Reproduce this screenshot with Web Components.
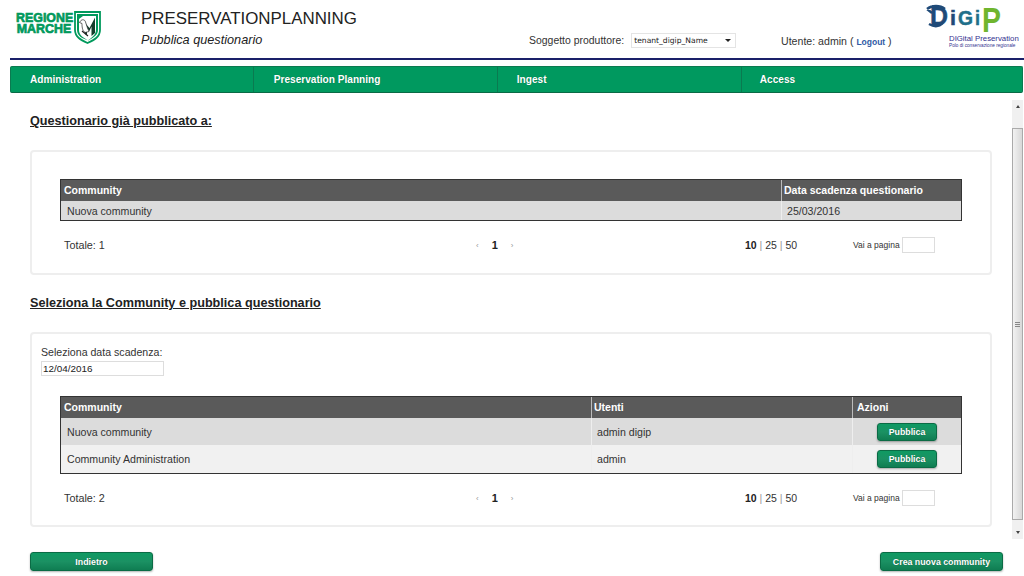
<!DOCTYPE html>
<html lang="it">
<head>
<meta charset="utf-8">
<title>Pubblica questionario</title>
<style>
  html, body { margin: 0; padding: 0; height: 576px; overflow: hidden; background: #fff; }
  body { font: 12px "Liberation Sans", Arial, sans-serif; color: #333; display: flex; flex-direction: column; }
  .content { width: 1012px; display: flex; flex-direction: column; }
  .workspace { display: flex; height: 440px; margin-top: 7px; }
</style>
</head>
<body>
<dg-header></dg-header>
<dg-nav></dg-nav>
<div class="workspace">
  <div class="content">
    <dg-title style="--top:12px">Questionario già pubblicato a:</dg-title>
    <dg-panel style="--h:125px;--mt:20px;--pt:27px">
      <dg-table cols="720px 1fr" head='["Community","Data scadenza questionario"]'
        rows='[["Nuova community","25/03/2016"]]' row-heights="19"></dg-table>
      <dg-pager total="1"></dg-pager>
    </dg-panel>
    <dg-title style="--top:19px">Seleziona la Community e pubblica questionario</dg-title>
    <dg-panel style="--h:195px;--mt:20px;--pt:11px">
      <dg-date label="Seleziona data scadenza:" value="12/04/2016"></dg-date>
      <dg-table style="--table-top:20px" cols="530px 261px 1fr" head='["Community","Utenti","Azioni"]'
        rows='[["Nuova community","admin digip","@Pubblica"],["Community Administration","admin","@Pubblica"]]' row-heights="27 28"></dg-table>
      <dg-pager total="2"></dg-pager>
    </dg-panel>
  </div>
  <dg-scrollbar></dg-scrollbar>
</div>
<dg-actions>
  <dg-btn slot="left" style="--w:123px;--h:19px">Indietro</dg-btn>
  <dg-btn slot="right" style="--w:123px;--h:19px">Crea nuova community</dg-btn>
</dg-actions>

<script>
class DgHeader extends HTMLElement {
  constructor() {
    super();
    this.attachShadow({ mode: 'open' });
    this.shadowRoot.innerHTML = `
    <style>
      :host { display: block; height: 60px; box-sizing: border-box; position: relative; }
      .row { display: flex; height: 58px; }
      .marche { width: 141px; padding: 11px 0 0 16px; box-sizing: border-box; display: flex; }
      .name { width: 55px; margin-right: 3px; padding-top: 1px; }
      .name div { width: 60px; font: 700 13.5px/11px "Liberation Sans", sans-serif; color: #00995c; text-align: right;
        transform: scaleX(.92); transform-origin: left top; -webkit-text-stroke: .7px #00995c; white-space: nowrap; }
      .titles { width: 388px; }
      h1 { font-size: 16.9px; line-height: 20px; font-weight: 400; margin: 9px 0 0; color: #222; }
      h2 { font-size: 12.7px; line-height: 15px; font-weight: 400; font-style: italic; margin: 4px 0 0; color: #222; }
      .soggetto { width: 252px; display: flex; align-items: flex-start; padding-top: 33px; box-sizing: border-box; font-size: 10.45px; line-height: 16px; color: #333; }
      .select { width: 105px; height: 15px; margin-left: 7px; box-sizing: border-box; border: 1px solid #e4e4e4; background: #fff; font-size: 7.6px; line-height: 14px;
        padding-left: 2px; color: #222; position: relative; font-family: "DejaVu Sans", sans-serif; }
      .select::after { content: ""; position: absolute; right: 4px; top: 5px; border: 3px solid transparent; border-top: 3px solid #222; border-bottom: 0; }
      .user { width: 145px; padding-top: 33px; box-sizing: border-box; font-size: 10.6px; line-height: 16px; color: #333; white-space: nowrap; }
      .user a { font-size: 8.5px; font-weight: 700; color: #2f5aa5; text-decoration: none; }
      .digip { width: 97px; position: relative; }
      .line { height: 2px; margin-left: 10px; background: #1a2069; }
      svg { display: block; }
    </style>
    <div class="row">
      <div class="marche">
        <div class="name"><div>REGIONE<br>MARCHE</div></div>
        <svg width="27" height="33" viewBox="0 0 27 33">
          <path d="M1 1H26V19C26 26 20 29 13.500 32C7 29 1 26 1 19Z" fill="#fff" stroke="#00995c" stroke-width="1.800"/>
          <path d="M3 3H24V5H9L5 8V19C5 24 9 26.500 13.500 29C9 28 3 25 3 19Z" fill="#00995c"/>
          <path d="M24 5V19C24 24 19 27 13.500 30C17 27 22 24 22 19V5Z" fill="#00995c"/>
          <path d="M11 23V12L15.500 17L21 6.500V22L17.500 25V15.500L15.500 20L13 17.500V24Z" fill="#143d2b"/>
          <path d="M6.500 10C8 8 11 8.500 11.500 11L13.500 17L15 20.500L11 21.500C8 19.500 8 15 8 12.500L5.500 11.500Z" fill="#fff" stroke="#222" stroke-width=".7"/>
          <path d="M8 20L14 25" stroke="#222" stroke-width="1.200"/>
        </svg>
      </div>
      <div class="titles">
        <h1>PRESERVATIONPLANNING</h1>
        <h2>Pubblica questionario</h2>
      </div>
      <div class="soggetto">Soggetto produttore:<div class="select">tenant_digip_Name</div></div>
      <div class="user">Utente: admin ( <a href="#">Logout</a> )</div>
      <div class="digip">
        <svg width="97" height="58" viewBox="0 0 97 58">
          <g font-family="Liberation Sans, sans-serif" font-weight="700" stroke-width=".5">
            <text x="4" y="25" font-size="25" fill="#1f4a78" stroke="#1f4a78" textLength="18" lengthAdjust="spacingAndGlyphs">D</text>
            <text x="24" y="25" font-size="21" fill="#1f4a78" stroke="#1f4a78" textLength="6" lengthAdjust="spacingAndGlyphs">i</text>
            <text x="32" y="25" font-size="20" fill="#1f6f8a" stroke="#1f6f8a" textLength="15" lengthAdjust="spacingAndGlyphs">G</text>
            <text x="49" y="25" font-size="21" fill="#1f6f8a" stroke="#1f6f8a" textLength="5" lengthAdjust="spacingAndGlyphs">i</text>
            <text x="56" y="32" font-size="35" fill="#6fb52e" textLength="19" lengthAdjust="spacingAndGlyphs">P</text>
          </g>
          <path d="M1 9C6 5 14 5 19 9M1 9L6 13M1 9L7 6" fill="none" stroke="#1f4a78" stroke-width="2.400"/>
          <path d="M3 24C8 27 13 27 17 23" fill="none" stroke="#1f4a78" stroke-width="2.400"/>
          <text x="23" y="41" font-family="Liberation Sans, sans-serif" font-size="7.800" fill="#33318f">DIGital Preservation</text>
          <text x="23" y="47" font-family="Liberation Sans, sans-serif" font-size="4.700" fill="#33318f">Polo di conservazione regionale</text>
        </svg>
      </div>
    </div>
    <div class="line"></div>`;
  }
}
customElements.define('dg-header', DgHeader);

class DgNav extends HTMLElement {
  constructor() {
    super();
    this.attachShadow({ mode: 'open' });
    this.shadowRoot.innerHTML = `
    <style>
      :host { display: grid; grid-template-columns: 242.800px 244px 244px 1fr; height: 27px; margin: 6px 1px 0 10px; box-sizing: border-box;
        background: #00995f; border: 1px solid #0b7a50; border-bottom-color: #0a6a46; border-radius: 2px;
        font-size: 10.100px; font-weight: 700; line-height: 25px; color: #fff; }
      div { padding-left: 19px; border-right: 1px solid #0a7a50; text-shadow: 0 0 1px rgba(0,0,0,.3); }
      div:nth-of-type(2) { padding-left: 20px; }
      div:nth-of-type(4) { border-right: 0; padding-left: 18px; }
    </style>
    <div>Administration</div><div>Preservation Planning</div><div>Ingest</div><div>Access</div>`;
  }
}
customElements.define('dg-nav', DgNav);

class DgTitle extends HTMLElement {
  constructor() {
    super();
    this.attachShadow({ mode: 'open' });
    this.shadowRoot.innerHTML = `
    <style>
      :host { display: block; margin: var(--top, 0) 0 0 30px; font-size: 12.650px; line-height: 18px; font-weight: 700; color: #222; text-decoration: underline; }
    </style>
    <slot></slot>`;
  }
}
customElements.define('dg-title', DgTitle);

class DgPanel extends HTMLElement {
  constructor() {
    super();
    this.attachShadow({ mode: 'open' });
    this.shadowRoot.innerHTML = `
    <style>
      :host { display: block; box-sizing: border-box; height: var(--h); margin: var(--mt) 20px 0 30px; padding: var(--pt) 30px 0 28px;
        border: 2px solid #eeeeee; border-radius: 4px; background: #fff; }
    </style>
    <slot></slot>`;
  }
}
customElements.define('dg-panel', DgPanel);

class DgTable extends HTMLElement {
  connectedCallback() {
    const head = JSON.parse(this.getAttribute('head'));
    const rows = JSON.parse(this.getAttribute('rows'));
    const cols = this.getAttribute('cols');
    const heights = this.getAttribute('row-heights').split(' ');
    const cell = c => c[0] === '@' ? `<dg-btn style="--w:60px;--h:18px">${c.slice(1)}</dg-btn>` : c;
    this.attachShadow({ mode: 'open' });
    this.shadowRoot.innerHTML = `
    <style>
      :host { display: block; margin-top: var(--table-top, 0); border: 1px solid #333; box-sizing: border-box; width: 902px; }
      .r { display: grid; grid-template-columns: ${cols}; }
      .h { height: 21px; background: #5a5a5a; color: #fff; font-weight: 700; font-size: 10.500px; line-height: 21px; }
      .h div { padding-left: 2px; border-left: 1px solid #bbb; }
      .h div:first-child { border-left: 0; padding-left: 3px; }
      .h div:nth-child(3) { padding-left: 4px; }
      .b { font-size: 10.600px; color: #333; }
      .b div { padding-left: 5px; border-left: 1px solid #eee; display: flex; align-items: center; }
      .b div:first-child { border-left: 0; padding-left: 6px; }
      .b div.act { padding-left: 24px; }
      .odd { background: #dcdcdc; }
      .even { background: #f1f1f1; }
    </style>
    <div class="r h">${head.map(h => `<div>${h}</div>`).join('')}</div>
    ${rows.map((r, i) => `<div class="r b ${i % 2 ? 'even' : 'odd'}" style="height:${heights[i]}px">
      ${r.map(c => `<div class="${c[0] === '@' ? 'act' : ''}">${cell(c)}</div>`).join('')}</div>`).join('')}`;
  }
}
customElements.define('dg-table', DgTable);

class DgPager extends HTMLElement {
  connectedCallback() {
    this.attachShadow({ mode: 'open' });
    this.shadowRoot.innerHTML = `
    <style>
      :host { display: grid; grid-template-columns: 413px 272px 108px 1fr; align-items: center; height: 18px; margin-top: 15px; width: 902px; font-size: 10.800px; color: #333; }
      .total { padding-left: 4px; }
      .pages { display: flex; align-items: center; gap: 13px; padding-left: 3px; }
      .pages b { font-size: 11px; color: #222; }
      .pages i { font-style: normal; font-size: 8px; color: #999; }
      .sizes { font-size: 10.500px; }
      .sizes b { color: #222; }
      .sizes span { color: #999; }
      .goto { display: flex; align-items: center; gap: 2px; font-size: 8.500px; }
      .goto div { width: 33px; height: 16px; box-sizing: border-box; border: 1px solid #ddd; background: #fff; }
    </style>
    <div class="total">Totale: ${this.getAttribute('total')}</div>
    <div class="pages"><i>‹</i><b>1</b><i>›</i></div>
    <div class="sizes"><b>10</b> <span>|</span> 25 <span>|</span> 50</div>
    <div class="goto">Vai a pagina<div></div></div>`;
  }
}
customElements.define('dg-pager', DgPager);

class DgDate extends HTMLElement {
  connectedCallback() {
    this.attachShadow({ mode: 'open' });
    this.shadowRoot.innerHTML = `
    <style>
      :host { display: block; margin-left: -19px; font-size: 10.600px; line-height: 15px; color: #333; }
      .in { width: 123px; height: 15px; box-sizing: border-box; border: 1px solid #ddd; margin-top: 1px; padding-left: 1px; font-size: 9.900px; line-height: 13px; color: #222; background: #fff; }
    </style>
    <div>${this.getAttribute('label')}</div>
    <div class="in">${this.getAttribute('value')}</div>`;
  }
}
customElements.define('dg-date', DgDate);

class DgBtn extends HTMLElement {
  constructor() {
    super();
    this.attachShadow({ mode: 'open' });
    this.shadowRoot.innerHTML = `
    <style>
      :host { display: inline-flex; justify-content: center; align-items: center; box-sizing: border-box; width: var(--w); height: var(--h);
        background: linear-gradient(#0f9a63, #1b9163 50%, #0f7d52); border: 1px solid #0b6b45; border-radius: 3px;
        box-shadow: 0 1px 2px rgba(0,0,0,.3); color: #fff; font: 700 8.800px "Liberation Sans", sans-serif; white-space: nowrap;
        text-shadow: 0 0 1px rgba(0,0,0,.4); }
    </style>
    <slot></slot>`;
  }
}
customElements.define('dg-btn', DgBtn);

class DgScrollbar extends HTMLElement {
  constructor() {
    super();
    this.attachShadow({ mode: 'open' });
    this.shadowRoot.innerHTML = `
    <style>
      :host { display: flex; flex-direction: column; align-items: center; width: 11px; background: #f0f0f0; height: 439px; }
      .arrow { height: 28px; display: flex; justify-content: center; padding-top: 5px; box-sizing: border-box; }
      .arrow::before { content: ""; width: 0; height: 0; border: 2px solid transparent; border-top: 0; border-bottom: 3px solid #444; }
      .thumb { flex: 1; width: 100%; box-sizing: border-box; border: 1px solid #aaa; background: linear-gradient(90deg, #f2f2f2, #d8d8d8); display: flex; align-items: center; justify-content: center; }
      .grip { width: 5px; height: 5px; background: repeating-linear-gradient(#888 0 1px, transparent 1px 2px); }
      .down { height: 19px; padding-top: 11px; }
      .down::before { border: 2px solid transparent; border-bottom: 0; border-top: 3px solid #444; }
    </style>
    <div class="arrow"></div>
    <div class="thumb"><div class="grip"></div></div>
    <div class="arrow down"></div>`;
  }
}
customElements.define('dg-scrollbar', DgScrollbar);

class DgActions extends HTMLElement {
  constructor() {
    super();
    this.attachShadow({ mode: 'open' });
    this.shadowRoot.innerHTML = `
    <style>
      :host { display: flex; justify-content: space-between; padding: 12px 21px 0 30px; }
    </style>
    <slot name="left"></slot><slot name="right"></slot>`;
  }
}
customElements.define('dg-actions', DgActions);
</script>
</body>
</html>
